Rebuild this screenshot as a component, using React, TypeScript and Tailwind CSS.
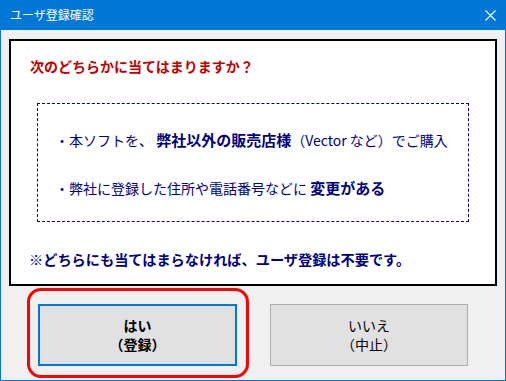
const jp = "font-['Noto_Sans_CJK_JP','Noto_Sans',sans-serif]";

function CloseIcon() {
  return (
    <svg width="11" height="11" viewBox="0 0 11 11" className="block">
      <path d="M0.5 0.5 L10.5 10.5 M10.5 0.5 L0.5 10.5" stroke="#ffffff" strokeWidth="1.1" fill="none" />
    </svg>
  );
}

export default function App() {
  return (
    <div className={`relative w-[506px] h-[381px] bg-[#f0f0f0] border-x border-b border-[#0078d7] ${jp}`}>
      {/* title bar */}
      <div className="h-[30px] bg-[#0078d7] -mx-px flex items-center justify-between pl-[10px] pr-[10px]">
        <span className="text-[12px] text-white leading-none">ユーザ登録確認</span>
        <CloseIcon />
      </div>

      {/* message panel */}
      <div className="ml-[8px] mt-[9px] w-[488px] h-[247px] bg-white border-2 border-black flex flex-col">
        <p className="mt-[15px] ml-[19px] h-[20px] leading-[20px] text-[14px] font-bold text-[#c00000]">
          次のどちらかに当てはまりますか？
        </p>

        <div className="ml-[26px] mt-[27px] w-[432px] h-[119px] border border-dashed border-[#000080] pl-[17px] pt-[26px] flex flex-col gap-[28px] text-[#000080] text-[14px]">
          <p className="h-[20px] leading-[20px] whitespace-nowrap">
            ・本ソフトを、 <span className="font-bold text-[15px]">弊社以外の販売店様</span>（Vector など）でご購入
          </p>
          <p className="h-[20px] leading-[20px] whitespace-nowrap">
            ・弊社に登録した住所や電話番号などに <span className="font-bold text-[15px]">変更がある</span>
          </p>
        </div>

        <p className="mt-[27px] ml-[18px] h-[20px] leading-[20px] text-[14.2px] font-bold text-[#000080] whitespace-nowrap">
          ※どちらにも当てはまらなければ、ユーザ登録は不要です。
        </p>
      </div>

      {/* buttons */}
      <div className="mt-[18px] ml-[37px] flex gap-[33px]">
        <button className="w-[199px] h-[62px] bg-[#e1e1e1] border-2 border-[#0078d7] flex flex-col items-center justify-center text-[14px] font-bold text-black leading-[19px]">
          <span>はい</span>
          <span>（登録）</span>
        </button>
        <button className="w-[198px] h-[62px] bg-[#e1e1e1] border border-[#adadad] flex flex-col items-center justify-center text-[14px] text-black leading-[19px]">
          <span>いいえ</span>
          <span>（中止）</span>
        </button>
      </div>

      {/* red highlight annotation */}
      <div className="absolute left-[26px] top-[288px] w-[222px] h-[90px] border-[3px] border-[#ff0000] rounded-[14px] pointer-events-none" />
    </div>
  );
}
